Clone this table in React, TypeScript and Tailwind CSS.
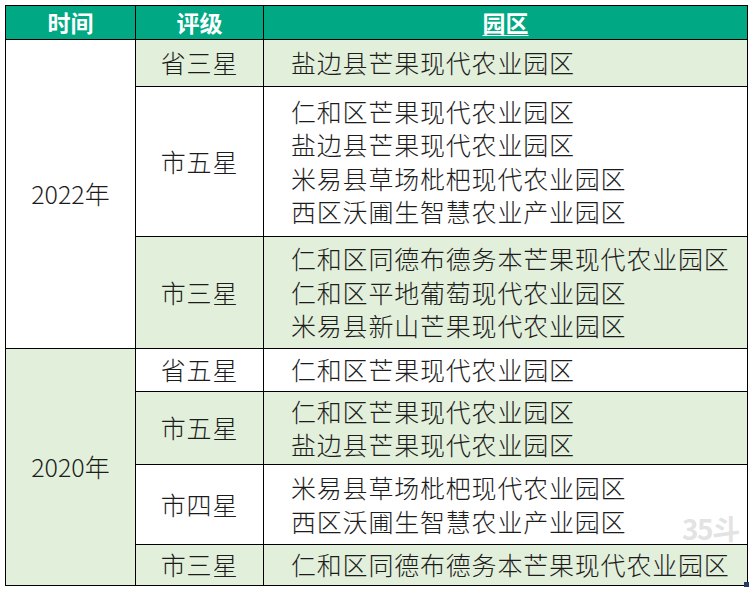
const FONT = '"Noto Sans CJK SC", "Noto Sans", sans-serif';

type Row = {
  level: string;
  parks: string[];
  height: number;
  green: boolean;
};

type Group = {
  year: string;
  green: boolean;
  rows: Row[];
};

const groups: Group[] = [
  {
    year: "2022年",
    green: false,
    rows: [
      { level: "省三星", parks: ["盐边县芒果现代农业园区"], height: 47, green: true },
      {
        level: "市五星",
        parks: [
          "仁和区芒果现代农业园区",
          "盐边县芒果现代农业园区",
          "米易县草场枇杷现代农业园区",
          "西区沃圃生智慧农业产业园区",
        ],
        height: 150,
        green: false,
      },
      {
        level: "市三星",
        parks: [
          "仁和区同德布德务本芒果现代农业园区",
          "仁和区平地葡萄现代农业园区",
          "米易县新山芒果现代农业园区",
        ],
        height: 112,
        green: true,
      },
    ],
  },
  {
    year: "2020年",
    green: true,
    rows: [
      { level: "省五星", parks: ["仁和区芒果现代农业园区"], height: 43, green: false },
      {
        level: "市五星",
        parks: ["仁和区芒果现代农业园区", "盐边县芒果现代农业园区"],
        height: 73,
        green: true,
      },
      {
        level: "市四星",
        parks: ["米易县草场枇杷现代农业园区", "西区沃圃生智慧农业产业园区"],
        height: 80,
        green: false,
      },
      { level: "市三星", parks: ["仁和区同德布德务本芒果现代农业园区"], height: 41, green: true },
    ],
  },
];

export default function App() {
  return (
    <div
      className="relative w-[751px] h-[590px] bg-white overflow-hidden text-[#1c1c1c]"
      style={{ fontFamily: FONT }}
    >
      <div className="pt-[5px] pl-[5px]">
        <table className="border-collapse table-fixed w-[742px]">
          <colgroup>
            <col className="w-[130px]" />
            <col className="w-[128px]" />
            <col className="w-[484px]" />
          </colgroup>
          <thead>
            <tr className="h-[34px] bg-[#00a984] text-white text-[23px] font-bold">
              <th className="border border-black p-0 leading-none">时间</th>
              <th className="border border-black p-0 leading-none">评级</th>
              <th className="border border-black p-0 leading-none">
                <span className="underline underline-offset-[3px] decoration-1">园区</span>
              </th>
            </tr>
          </thead>
          <tbody className="text-[25px] tracking-[0.8px] font-light">
            {groups.map((g) =>
              g.rows.map((r, i) => (
                <tr key={g.year + r.level + i} style={{ height: r.height }}>
                  {i === 0 && (
                    <td
                      rowSpan={g.rows.length}
                      className={`border border-black p-0 text-center align-middle tracking-normal ${
                        g.green ? "bg-[#e2efda]" : "bg-white"
                      }`}
                    >
                      {g.year}
                    </td>
                  )}
                  <td
                    className={`border border-black p-0 text-center align-middle ${
                      r.green ? "bg-[#e2efda]" : "bg-white"
                    }`}
                  >
                    {r.level}
                  </td>
                  <td
                    className={`border border-black py-0 pl-[27px] pr-0 align-middle leading-[33.5px] whitespace-nowrap ${
                      r.green ? "bg-[#e2efda]" : "bg-white"
                    }`}
                  >
                    {r.parks.map((p) => (
                      <div key={p}>{p}</div>
                    ))}
                  </td>
                </tr>
              ))
            )}
          </tbody>
        </table>
      </div>
      {/* watermark */}
      <div className="absolute left-[682px] top-[514px] text-[28px] leading-none font-bold text-[#c8c8c8] opacity-50 pointer-events-none tracking-tighter">
        35斗
      </div>
      <div className="absolute left-[744px] top-[582px] w-[5px] h-[5px] bg-[#2b3a67]" />
    </div>
  );
}
